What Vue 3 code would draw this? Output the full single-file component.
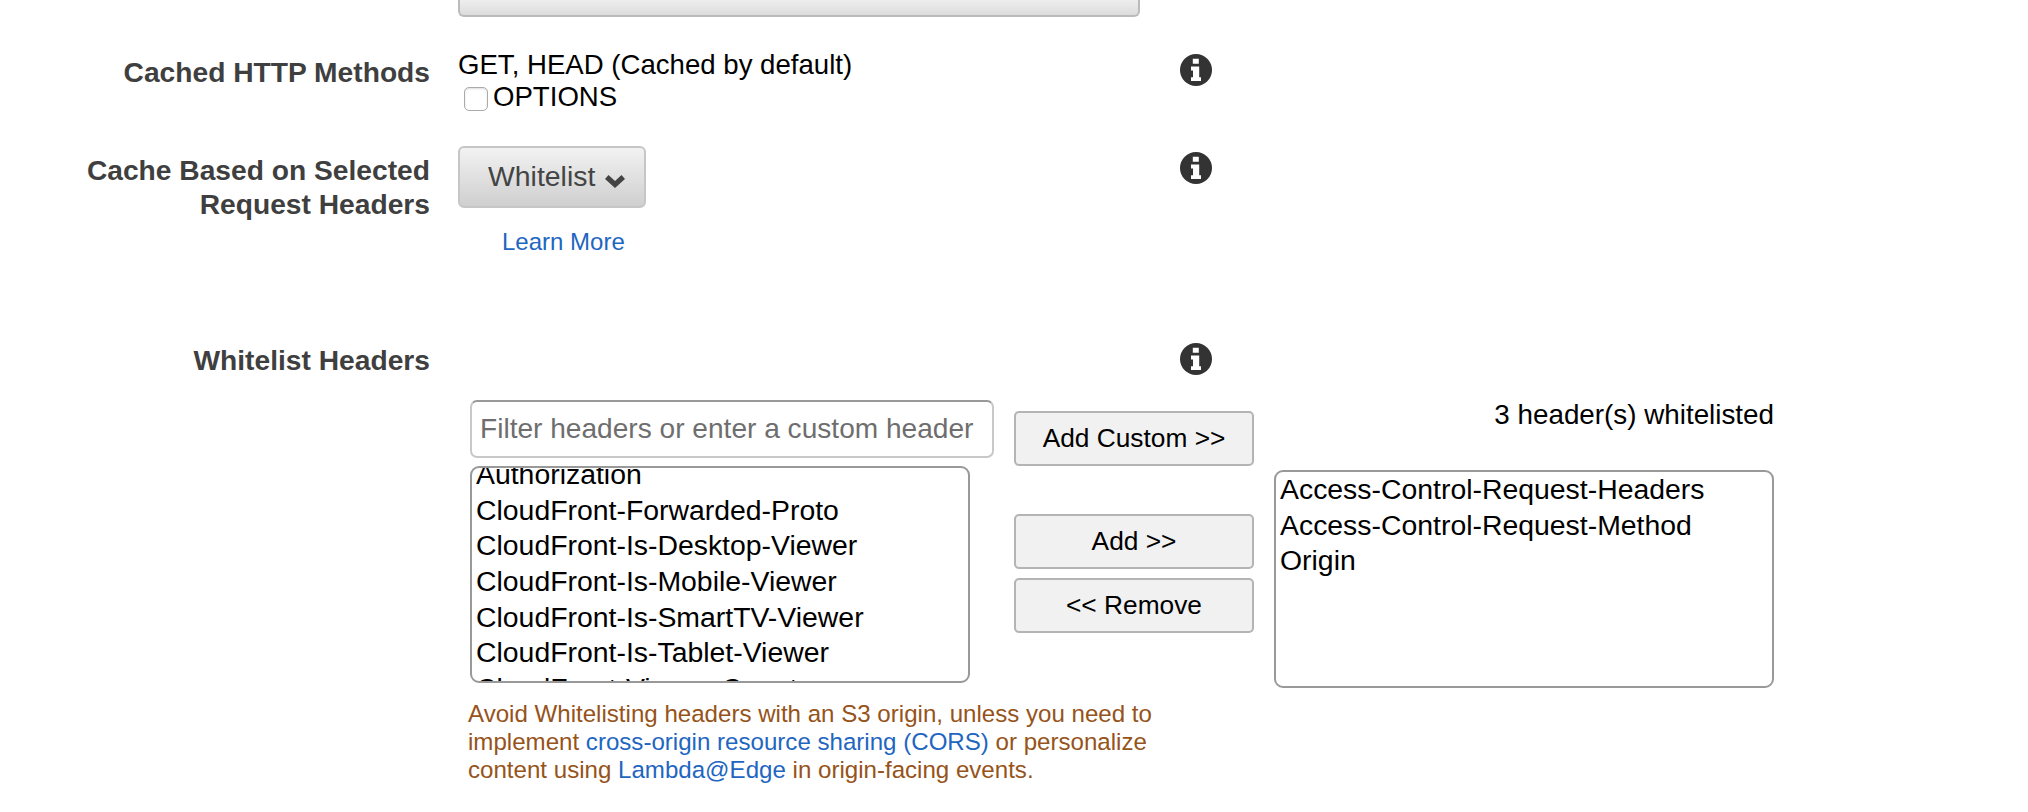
<template>
  <div class="page">
    <!-- cut-off control from the row above -->
    <div class="top-row">
      <div class="cut-button"></div>
    </div>

    <div class="row methods-row">
      <div class="label">Cached HTTP Methods</div>
      <div class="control">
        <div class="line">GET, HEAD (Cached by default)</div>
        <label class="check-line"><span class="checkbox"></span>OPTIONS</label>
      </div>
      <InfoIcon />
    </div>

    <div class="row headers-row">
      <div class="label">Cache Based on Selected<br />Request Headers</div>
      <div class="control">
        <button class="dropdown">Whitelist
          <svg class="chevron" viewBox="0 0 20 14" width="20" height="14">
            <path d="M0 5 3.5 1 10 7 16.5 1 20 5 10 14z" fill="#444" />
          </svg>
        </button>
        <a class="learn-more">Learn More</a>
      </div>
      <InfoIcon class="info-low" />
    </div>

    <div class="row whitelist-row">
      <div class="label">Whitelist Headers</div>
      <div class="control"></div>
      <InfoIcon />
    </div>

    <div class="picker">
      <div class="left-col">
        <input class="filter" type="text" placeholder="Filter headers or enter a custom header" />
        <div class="listbox available">
          <div class="list-inner">
            <div v-for="h in available" :key="h" class="option">{{ h }}</div>
          </div>
        </div>
      </div>
      <div class="mid-col">
        <button class="btn custom">Add Custom &gt;&gt;</button>
        <button class="btn add">Add &gt;&gt;</button>
        <button class="btn remove">&lt;&lt; Remove</button>
      </div>
      <div class="right-col">
        <div class="count">3 header(s) whitelisted</div>
        <div class="listbox chosen">
          <div v-for="h in chosen" :key="h" class="option">{{ h }}</div>
        </div>
      </div>
    </div>

    <p class="warning">
      Avoid Whitelisting headers with an S3 origin, unless you need to<br />
      implement <a>cross-origin resource sharing (CORS)</a> or personalize<br />
      content using <a>Lambda@Edge</a> in origin-facing events.
    </p>
  </div>
</template>

<script setup>
import { h } from 'vue';

// 圆形 info 图标
const InfoIcon = () =>
  h('svg', { class: 'info', viewBox: '0 0 32 32', width: 32, height: 32 }, [
    h('circle', { cx: 16, cy: 16, r: 16, fill: '#333' }),
    h('path', {
      fill: '#fff',
      d: 'M12.8 4.8h6v5h-6zM11 12.6h8.2v10.6H21V27H11v-3.8h2V16.4h-2z'
    })
  ]);

const available = [
  'Authorization',
  'CloudFront-Forwarded-Proto',
  'CloudFront-Is-Desktop-Viewer',
  'CloudFront-Is-Mobile-Viewer',
  'CloudFront-Is-SmartTV-Viewer',
  'CloudFront-Is-Tablet-Viewer',
  'CloudFront-Viewer-Country'
];
const chosen = ['Access-Control-Request-Headers', 'Access-Control-Request-Method', 'Origin'];
</script>

<style>
html, body {
  background: #fff;
  overflow: hidden;
}
</style>

<style scoped>
.page {
  width: 2028px;
  height: 812px;
  overflow: hidden;
  font-family: "Liberation Sans", Arial, sans-serif;
  font-size: 27.6px;
  color: #000;
}
.top-row {
  height: 17px;
  padding-left: 458px;
}
.cut-button {
  width: 682px;
  height: 17px;
  box-sizing: border-box;
  background: linear-gradient(#eee, #dcdcdc);
  border: 2px solid #bbb;
  border-top: none;
  border-radius: 0 0 6px 6px;
}
.row {
  display: flex;
  width: 1212px;
  align-items: flex-start;
}
.info {
  flex: none;
  margin-left: auto;
}
.info-low {
  margin-top: 6px;
}
.label {
  width: 430px;
  flex: none;
  text-align: right;
  font-size: 28.2px;
  font-weight: 700;
  color: #3f3f3f;
  line-height: 34px;
}
.control {
  margin-left: 28px;
}
.methods-row {
  margin-top: 37px;
  height: 92px;
}
.methods-row .label {
  margin-top: 1px;
}
.line {
  height: 32px;
  line-height: 32px;
  margin-top: -5px;
}
.check-line {
  display: flex;
  align-items: center;
  height: 32px;
}
.checkbox {
  width: 24px;
  height: 24px;
  box-sizing: border-box;
  margin: 3px 5px 0 6px;
  border: 1px solid #aaa;
  border-radius: 5px;
  box-shadow: inset 0 1px 2px #ddd;
}
.headers-row {
  height: 197px;
}
.headers-row .label {
  margin-top: 7px;
}
.dropdown {
  display: block;
  width: 188px;
  height: 62px;
  padding: 0 0 2px 28px;
  text-align: left;
  white-space: nowrap;
  font: 28.4px "Liberation Sans", Arial, sans-serif;
  color: #444;
  background: linear-gradient(#f2f2f2, #cfcfcf);
  border: 2px solid #c6c6c6;
  border-radius: 6px;
}
.chevron {
  margin-left: 2px;
  vertical-align: -2px;
}
.learn-more {
  display: block;
  margin: 19px 0 0 44px;
  font-size: 24px;
  line-height: 30px;
  color: #1f66c1;
}
.whitelist-row {
  height: 57px;
}
.picker {
  display: flex;
  align-items: flex-start;
  padding-left: 470px;
}
.left-col {
  width: 524px;
  flex: none;
}
.filter {
  display: block;
  width: 524px;
  height: 58px;
  box-sizing: border-box;
  padding: 0 8px;
  font: 28.1px "Liberation Sans", Arial, sans-serif;
  border: 2px solid #c8c8c8;
  border-top-color: #999;
  border-radius: 7px;
  outline: none;
}
.filter::placeholder {
  color: #6e6e6e;
  opacity: 1;
}
.listbox {
  box-sizing: border-box;
  border: 2px solid #999;
  border-radius: 9px;
  overflow: hidden;
  padding-left: 4px;
  font-size: 28.4px;
}
.available {
  width: 500px;
  height: 217px;
  margin-top: 8px;
}
.list-inner {
  margin-top: -11px;
}
.option {
  height: 35.7px;
  line-height: 35.7px;
  white-space: nowrap;
}
.mid-col {
  width: 240px;
  flex: none;
  margin-left: 20px;
  display: flex;
  flex-direction: column;
  padding-top: 11px;
}
.btn {
  display: block;
  width: 240px;
  height: 55px;
  padding: 0;
  font: 26.3px "Liberation Sans", Arial, sans-serif;
  color: #000;
  background: #f1f1f1;
  border: 2px solid #b4b4b4;
  border-radius: 5px;
}
.add {
  margin-top: 48px;
}
.remove {
  margin-top: 9px;
}
.right-col {
  width: 500px;
  flex: none;
  margin-left: 20px;
}
.count {
  text-align: right;
  height: 71px;
  line-height: 32px;
  margin-top: -1px;
  font-size: 27.8px;
}
.chosen {
  width: 500px;
  height: 218px;
}
.warning {
  margin: 12px 0 0 468px;
  font-size: 24.1px;
  line-height: 28px;
  color: #96531a;
}
.warning a {
  color: #1f66c1;
}
</style>
